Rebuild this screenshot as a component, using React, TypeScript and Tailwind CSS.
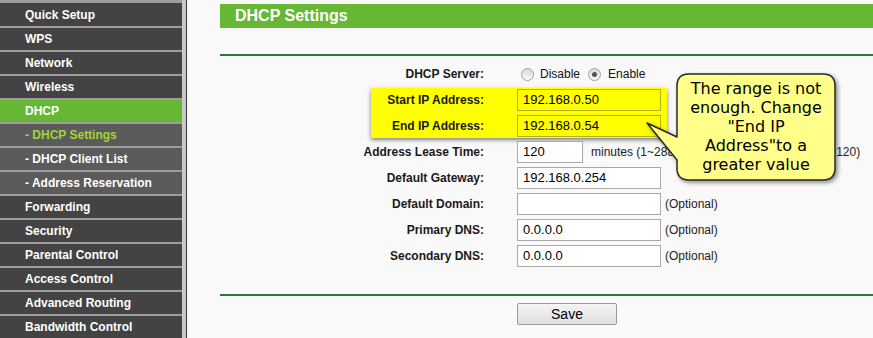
import React from "react";

const menu: { label: string; kind: "main" | "active" | "sub" | "subActive" }[] = [
  { label: "Quick Setup", kind: "main" },
  { label: "WPS", kind: "main" },
  { label: "Network", kind: "main" },
  { label: "Wireless", kind: "main" },
  { label: "DHCP", kind: "active" },
  { label: "- DHCP Settings", kind: "subActive" },
  { label: "- DHCP Client List", kind: "sub" },
  { label: "- Address Reservation", kind: "sub" },
  { label: "Forwarding", kind: "main" },
  { label: "Security", kind: "main" },
  { label: "Parental Control", kind: "main" },
  { label: "Access Control", kind: "main" },
  { label: "Advanced Routing", kind: "main" },
  { label: "Bandwidth Control", kind: "main" },
];

function MenuItem({ label, kind, first }: { label: string; kind: string; first: boolean }) {
  const bg =
    kind === "active"
      ? "bg-[#66b834]"
      : kind === "sub" || kind === "subActive"
      ? "bg-[#5b5b5b]"
      : "bg-[#434343]";
  const color = kind === "subActive" ? "text-[#a3d43c]" : "text-white";
  return (
    <div
      className={`flex items-center pl-[25px] text-[12px] font-bold ${bg} ${color} ${
        first ? "h-[23px]" : "h-[22px]"
      }`}
    >
      {label}
    </div>
  );
}

function Row({ label, children }: { label: string; children?: React.ReactNode }) {
  return (
    <div className="relative flex h-[26px] items-center">
      <div className="w-[264px] text-right text-[12px] font-bold text-[#1a1a1a]">{label}</div>
      <div className="ml-[33px] flex items-center">{children}</div>
    </div>
  );
}

function Field({ value, w = "w-[144px]", yellow = false }: { value: string; w?: string; yellow?: boolean }) {
  return (
    <div
      className={`flex h-[22px] items-center border pl-[5px] text-[13px] text-black ${w} ${
        yellow ? "border-[#b4b400] bg-transparent" : "border-[#a9a9a9] bg-white"
      }`}
    >
      {value}
    </div>
  );
}

function Note({ children, ml = "ml-[4px]" }: { children: React.ReactNode; ml?: string }) {
  return <span className={`${ml} whitespace-nowrap text-[12px] text-[#222]`}>{children}</span>;
}

export default function App() {
  return (
    <div className="relative flex h-[338px] w-[873px] overflow-hidden font-['Liberation_Sans',Arial,sans-serif]">
      {/* Sidebar */}
      <div className="flex w-[182px] shrink-0 flex-col gap-[2px] bg-[#9d9d9d] pt-[3px]">
        {menu.map((m, i) => (
          <MenuItem key={m.label} label={m.label} kind={m.kind} first={i === 0} />
        ))}
      </div>
      <div className="w-[4px] shrink-0 bg-[#c9c9c9]" />
      <div className="w-px shrink-0 bg-[#333]" />

      {/* Content */}
      <div className="flex min-w-0 flex-1 flex-col bg-[#f9f9f9] pl-[33px]">
        <div className="mt-[4px] flex h-[24px] items-center bg-[#66b834] pl-[15px] text-[16px] font-bold text-white">
          DHCP Settings
        </div>
        <div className="mt-[26px] h-[2px] bg-[#237a3c]" />

        <div className="mt-[5px] flex flex-col">
          <Row label="DHCP Server:">
            <span className="ml-[4px] inline-block h-[13px] w-[13px] rounded-full border border-[#a3a3a3] bg-linear-to-b from-[#d8d8d8] to-[#fbfbfb]" />
            <span className="ml-[6px] text-[12px] text-[#111]">Disable</span>
            <span className="ml-[8px] flex h-[13px] w-[13px] items-center justify-center rounded-full border border-[#a3a3a3] bg-linear-to-b from-[#d8d8d8] to-[#fbfbfb]">
              <span className="h-[5px] w-[5px] rounded-full bg-[#555]" />
            </span>
            <span className="ml-[7px] text-[12px] text-[#111]">Enable</span>
          </Row>

          <div className="relative">
            <div className="absolute left-[151px] top-[1px] h-[50px] w-[296px] bg-[#ffff00] shadow-[0_2px_4px_rgba(0,0,0,0.5)]" />
            <Row label="Start IP Address:">
              <Field value="192.168.0.50" yellow />
            </Row>
            <Row label="End IP Address:">
              <Field value="192.168.0.54" yellow />
            </Row>
          </div>

          <Row label="Address Lease Time:">
            <Field value="120" w="w-[66px]" />
            <Note ml="ml-[8px]">minutes (1~2880 minutes, the default value is 120)</Note>
          </Row>
          <Row label="Default Gateway:">
            <Field value="192.168.0.254" />
          </Row>
          <Row label="Default Domain:">
            <Field value="" />
            <Note>(Optional)</Note>
          </Row>
          <Row label="Primary DNS:">
            <Field value="0.0.0.0" />
            <Note>(Optional)</Note>
          </Row>
          <Row label="Secondary DNS:">
            <Field value="0.0.0.0" />
            <Note>(Optional)</Note>
          </Row>
        </div>

        <div className="mt-[25px] h-[2px] bg-[#237a3c]" />
        <div className="mt-[7px] pl-[297px]">
          <button className="flex h-[22px] w-[100px] items-center justify-center rounded-[2px] border border-[#9a9a9a] bg-linear-to-b from-[#f6f6f6] to-[#dedede] text-[14px] text-black">
            Save
          </button>
        </div>
      </div>

      {/* Callout annotation */}
      <svg
        className="absolute left-[645px] top-[70px] drop-shadow-[2px_2px_2px_rgba(0,0,0,0.45)]"
        width="196"
        height="116"
        viewBox="0 0 196 116"
      >
        <path
          d="M 44 4 H 178 Q 190 4 190 16 V 98 Q 190 110 178 110 H 44 Q 32 110 32 98 V 90 L 2 53 L 32 67 V 16 Q 32 4 44 4 Z"
          fill="#ffff8a"
          stroke="#2a2a2a"
          strokeWidth="1.5"
          strokeLinejoin="round"
        />
      </svg>
      <div className="absolute left-[677px] top-[79px] w-[158px] text-center font-['DejaVu_Sans',Verdana,sans-serif] text-[16px] leading-[19px] text-black">
        The range is not
        <br />
        enough. Change
        <br />
        "End IP
        <br />
        Address"to a
        <br />
        greater value
      </div>
    </div>
  );
}
